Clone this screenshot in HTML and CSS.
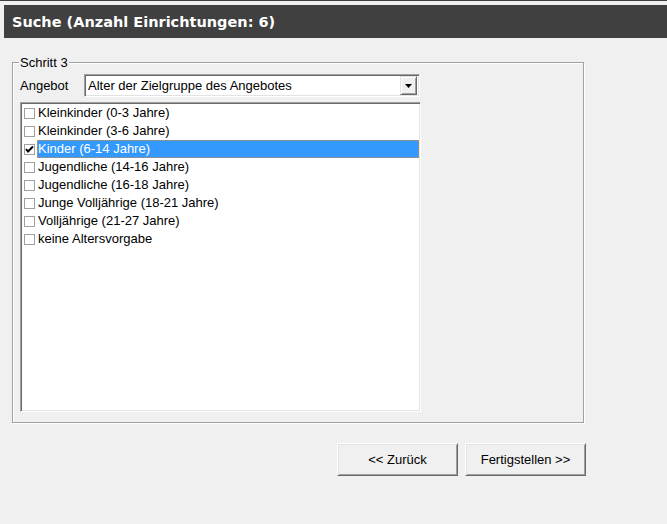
FILE: index.html
```html
<!DOCTYPE html>
<html lang="de">
<head>
<meta charset="utf-8">
<title>Suche</title>
<link rel="stylesheet" href="styles.css">
</head>
<body>
<div class="topline"></div>
<div class="titlebar">Suche (Anzahl Einrichtungen: 6)</div>
<div class="content">
  <div class="group">
    <span class="legend">Schritt 3</span>
    <div class="row">
      <span class="label">Angebot</span>
      <div class="select">
        <span class="value">Alter der Zielgruppe des Angebotes</span>
        <span class="dd"><svg width="7" height="4" viewBox="0 0 7 4"><polygon points="0,0 7,0 3.5,4" fill="#000"/></svg></span>
      </div>
    </div>
    <ul class="list">
      <li><span class="cb"></span><span class="txt">Kleinkinder (0-3 Jahre)</span></li>
      <li><span class="cb"></span><span class="txt">Kleinkinder (3-6 Jahre)</span></li>
      <li><span class="cb checked"><svg width="9" height="9" viewBox="0 0 9 9"><polyline points="1,4 3,6.5 8,1.5" fill="none" stroke="#000" stroke-width="2"/></svg></span><span class="txt selected">Kinder (6-14 Jahre)</span></li>
      <li><span class="cb"></span><span class="txt">Jugendliche (14-16 Jahre)</span></li>
      <li><span class="cb"></span><span class="txt">Jugendliche (16-18 Jahre)</span></li>
      <li><span class="cb"></span><span class="txt">Junge Volljährige (18-21 Jahre)</span></li>
      <li><span class="cb"></span><span class="txt">Volljährige (21-27 Jahre)</span></li>
      <li><span class="cb"></span><span class="txt">keine Altersvorgabe</span></li>
    </ul>
  </div>
  <div class="buttons">
    <button class="btn">&lt;&lt; Zurück</button>
    <button class="btn">Fertigstellen &gt;&gt;</button>
  </div>
</div>
</body>
</html>
```
FILE: styles.css
```css
* { box-sizing: border-box; }
body {
  margin: 0;
  background: #f0f0f0;
  font-family: "Liberation Sans", Arial, sans-serif;
  font-size: 13px;
  color: #000;
}
.topline {
  height: 1px;
  background: #404040;
  margin-bottom: 4px;
}
.titlebar {
  margin-left: 4px;
  height: 33px;
  background: #404040;
  color: #fff;
  font-family: "DejaVu Sans", Verdana, sans-serif;
  font-weight: bold;
  font-size: 14.5px;
  display: flex;
  align-items: center;
  padding-left: 8px;
}
.content {
  padding: 24px 0 0 12px;
}
.group {
  position: relative;
  width: 572px;
  height: 361px;
  border: 1px solid #a0a0a0;
  box-shadow: inset 1px 1px 0 #fff, 1px 1px 0 #fff;
  padding: 11px 7px 0 7px;
}
.legend {
  position: absolute;
  top: -8px;
  left: 6px;
  padding: 0 1px;
  line-height: 15px;
  background: #f0f0f0;
}
.row {
  display: flex;
  align-items: center;
  height: 23px;
}
.label {
  width: 64px;
}
.select {
  width: 336px;
  height: 23px;
  background: #fff;
  border-top: 1px solid #a0a0a0;
  border-left: 1px solid #a0a0a0;
  border-bottom: 1px solid #fff;
  border-right: 1px solid #fff;
  box-shadow: inset 1px 1px 0 #696969, inset -1px -1px 0 #e3e3e3;
  display: flex;
  align-items: center;
  justify-content: space-between;
  padding: 2px 2px 2px 3px;
}
.dd {
  width: 17px;
  height: 19px;
  background: #f0f0f0;
  border-top: 1px solid #e3e3e3;
  border-left: 1px solid #e3e3e3;
  border-bottom: 1px solid #696969;
  border-right: 1px solid #696969;
  box-shadow: inset 1px 1px 0 #fff, inset -1px -1px 0 #a0a0a0;
  display: flex;
  align-items: center;
  justify-content: center;
}
.dd svg { display: block; }
.list {
  list-style: none;
  margin: 5px 0 0 0;
  padding: 1px 0 0 0;
  width: 401px;
  height: 310px;
  background: #fff;
  border-top: 1px solid #a0a0a0;
  border-left: 1px solid #a0a0a0;
  border-bottom: 1px solid #fff;
  border-right: 1px solid #fff;
  box-shadow: inset 1px 1px 0 #696969, inset -1px -1px 0 #e3e3e3;
}
.list li {
  display: flex;
  align-items: center;
  height: 18px;
  padding-left: 3px;
  padding-right: 1px;
}
.cb {
  width: 11px;
  height: 11px;
  border: 1px solid #a0a0a0;
  background: #fff;
  margin-right: 2px;
  display: flex;
  align-items: center;
  justify-content: center;
  flex: none;
}
.cb svg { display: block; }
.txt {
  line-height: 18px;
  padding: 0 1px;
}
.txt.selected {
  flex: 1;
  background: #3399ff;
  color: #fff;
  outline: 1px dotted #d88c3c;
  outline-offset: -1px;
}
.buttons {
  width: 574px;
  display: flex;
  justify-content: flex-end;
  gap: 7px;
  margin-top: 20px;
}
.btn {
  width: 121px;
  height: 33px;
  background: #f0f0f0;
  font-family: "Liberation Sans", Arial, sans-serif;
  font-size: 13px;
  color: #000;
  border-top: 1px solid #fff;
  border-left: 1px solid #fff;
  border-bottom: 1px solid #696969;
  border-right: 1px solid #696969;
  box-shadow: inset 1px 1px 0 #e3e3e3, inset -1px -1px 0 #a0a0a0;
  padding: 0;
}
```
